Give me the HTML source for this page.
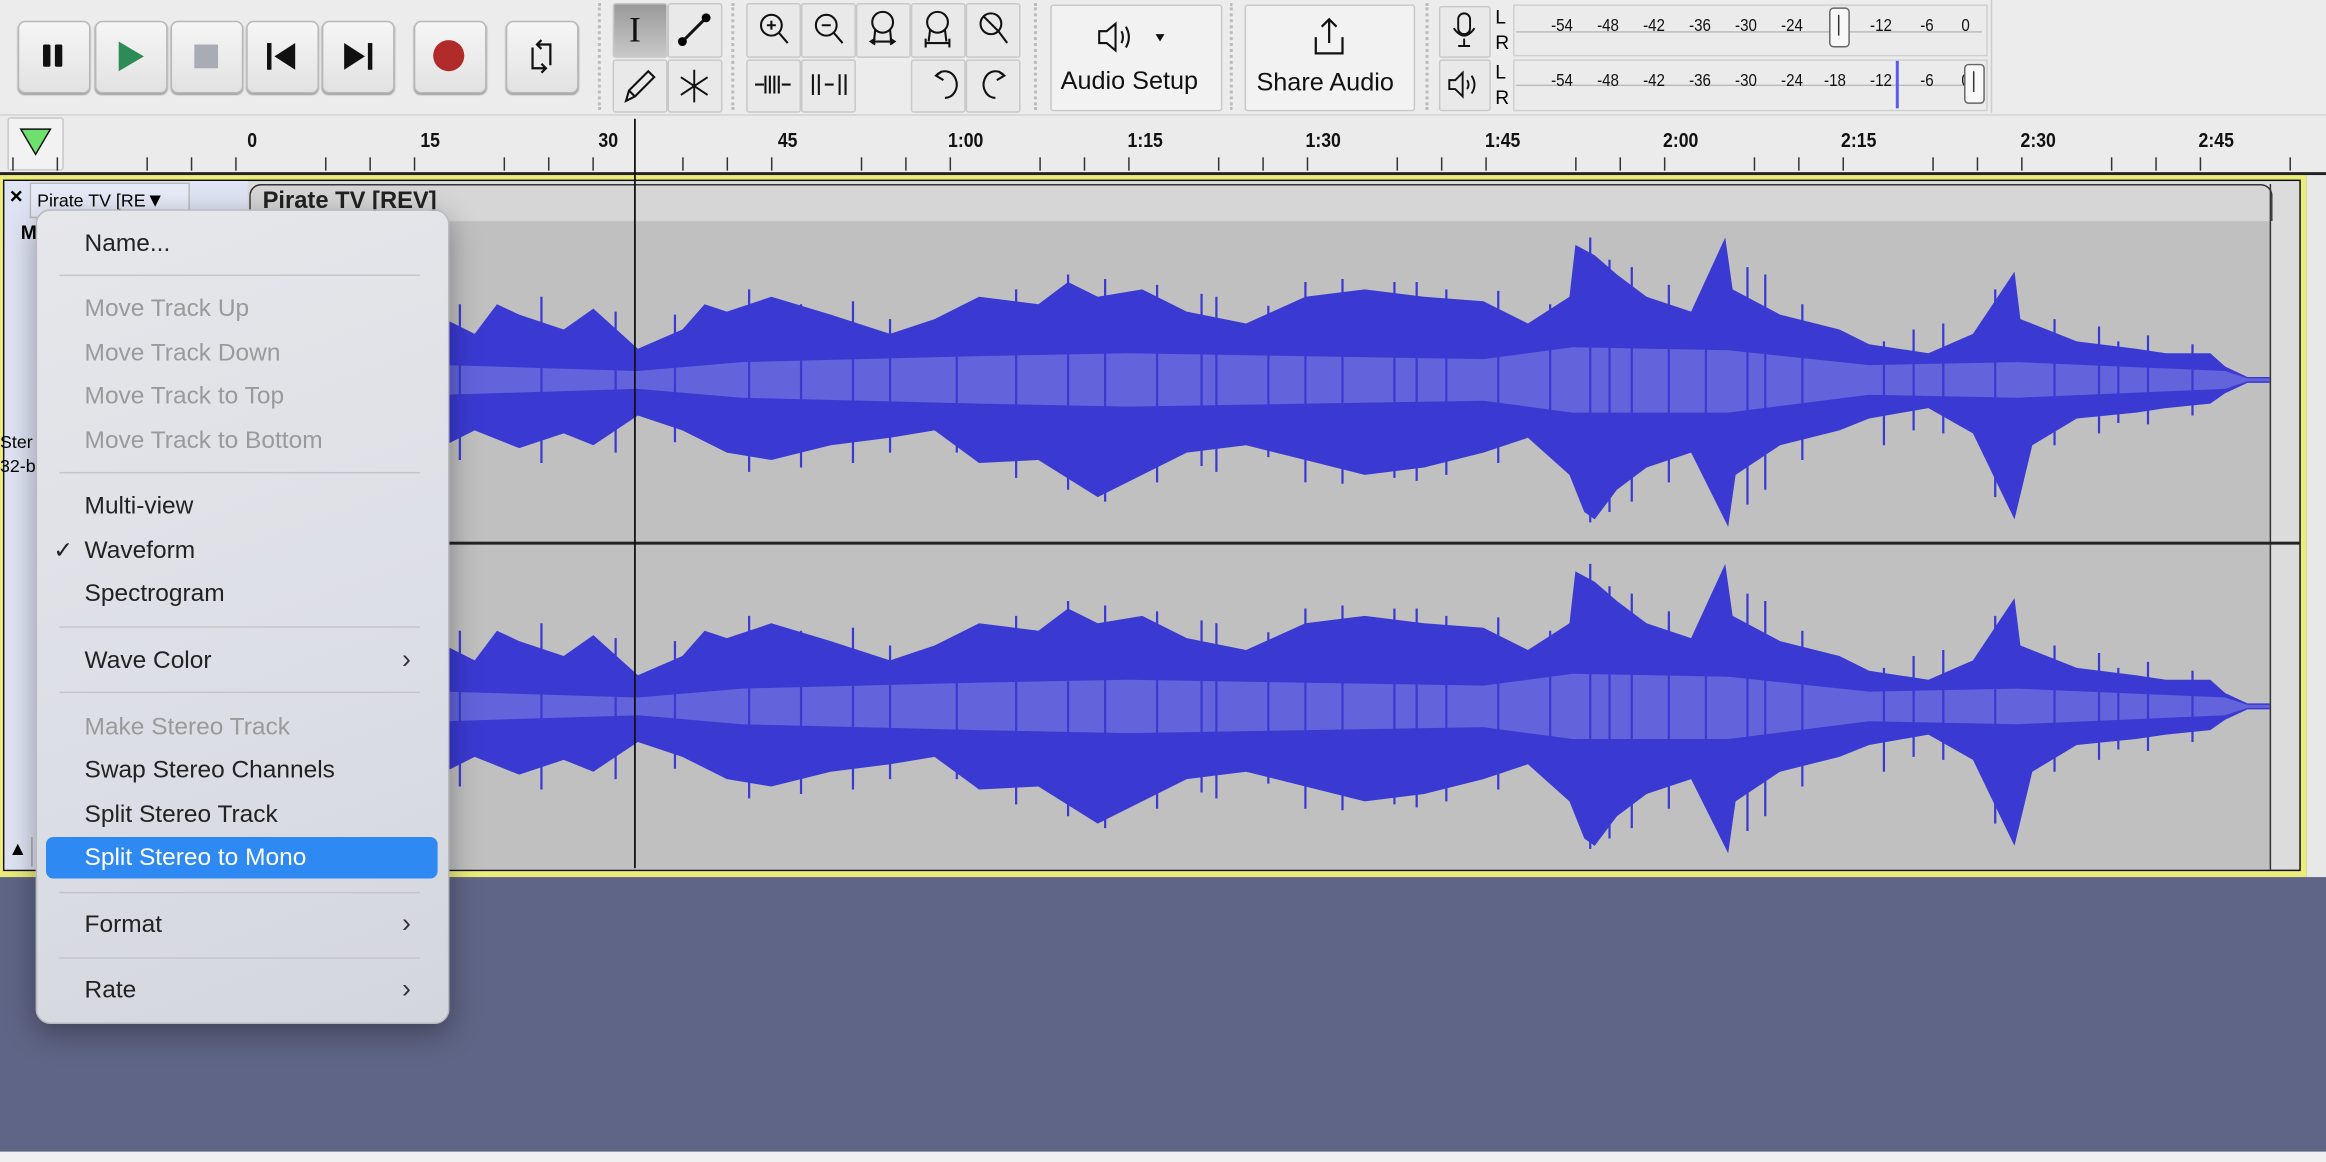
<!DOCTYPE html>
<html><head><meta charset="utf-8"><style>
html,body{margin:0;padding:0;width:2326px;height:1162px;overflow:hidden;background:#f0f0f0;}
#w{position:absolute;left:0;top:0;width:1568px;height:783px;transform-origin:0 0;transform:scale(1.48342,1.48404);font-family:"Liberation Sans",sans-serif;background:#ececec;overflow:hidden}
.a{position:absolute}
.btn{position:absolute;background:linear-gradient(#f6f6f6,#e2e2e2);border:1px solid #b8b8b8;border-radius:5px;box-shadow:0 1px 1px #999}
.tb{position:absolute;background:#e9e9e9;border:1px solid #c8c8c8;border-radius:2px}
.lbl{position:absolute;font-size:14px;font-weight:bold;transform:scaleX(.85);transform-origin:center;color:#111;width:50px;text-align:center;top:86px}
.mt{position:absolute;font-size:12px;transform:scaleX(.85);color:#111;width:24px;text-align:center}
.mi{position:absolute;left:57px;font-size:16.5px;color:#222;line-height:20px}
.dis{color:#9a9a9a}
.sep{position:absolute;left:40px;width:243px;height:1px;background:#c5c5c8}
.chev{position:absolute;left:271px;font-size:18px;color:#333;line-height:20px}
</style></head><body><div id="w">
<div class="a" style="left:0;top:0;width:1568px;height:77px;background:#ececec;border-bottom:1px solid #cfcfcf"></div>
<div class="btn" style="left:12px;top:14px;width:47px;height:47px"></div>
<div class="a" style="left:29px;top:30px;width:5px;height:15px;background:#111;border-radius:1px"></div><div class="a" style="left:37px;top:30px;width:5px;height:15px;background:#111;border-radius:1px"></div>
<div class="btn" style="left:64px;top:14px;width:47px;height:47px"></div>
<svg class="a" style="left:78px;top:27px" width="20" height="22"><path d="M2 1 L19 11 L2 21Z" fill="#2e8b57"/></svg>
<div class="btn" style="left:115px;top:14px;width:47px;height:47px"></div>
<div class="a" style="left:131px;top:30px;width:16px;height:16px;background:#a8acb4"></div>
<div class="btn" style="left:166px;top:14px;width:47px;height:47px"></div>
<svg class="a" style="left:179px;top:28px" width="22" height="20"><rect x="1" y="1" width="3" height="18" fill="#111"/><path d="M20 1 L6 10 L20 19Z" fill="#111"/></svg>
<div class="btn" style="left:217px;top:14px;width:47px;height:47px"></div>
<svg class="a" style="left:231px;top:28px" width="22" height="20"><rect x="17" y="1" width="3" height="18" fill="#111"/><path d="M1 1 L15 10 L1 19Z" fill="#111"/></svg>
<div class="btn" style="left:279px;top:14px;width:47px;height:47px"></div>
<div class="a" style="left:292px;top:27px;width:21px;height:21px;background:#b22b2b;border-radius:50%"></div>
<div class="btn" style="left:341px;top:14px;width:47px;height:47px"></div>
<svg class="a" style="left:353px;top:25px" width="24" height="26" fill="none" stroke="#111" stroke-width="1.5"><path d="M9 5 H18 V19 M15 21 H6 V7 M12 2 L9 5 L12 8 M12 18 L15 21 L12 24"/></svg>
<div class="a" style="left:403px;top:2px;width:2px;height:72px;border-left:2px dotted #bbb"></div>
<div class="tb" style="left:413px;top:2px;width:35px;height:35px;background:linear-gradient(#999,#c8c8c8)"></div>
<div class="a" style="left:424px;top:8px;font-size:24px;color:#111;font-family:'Liberation Serif'">I</div>
<div class="tb" style="left:450px;top:2px;width:35px;height:35px"></div>
<svg class="a" style="left:453px;top:5px" width="30" height="30"><path d="M6 24 L24 6" stroke="#111" stroke-width="2"/><circle cx="7" cy="23" r="3"/><circle cx="23" cy="7" r="3"/></svg>
<div class="tb" style="left:413px;top:40px;width:35px;height:34px"></div>
<svg class="a" style="left:417px;top:44px" width="28" height="28" fill="none" stroke="#111" stroke-width="1.4"><path d="M5 24 L7 17 L20 4 L24 8 L11 21Z M7 17 L11 21"/></svg>
<div class="tb" style="left:450px;top:40px;width:35px;height:34px"></div>
<svg class="a" style="left:455px;top:45px" width="26" height="26" stroke="#111" stroke-width="1.3"><path d="M13 2V24 M4 7 L22 19 M4 19 L22 7"/></svg>
<div class="a" style="left:493px;top:2px;width:2px;height:72px;border-left:2px dotted #bbb"></div>
<div class="tb" style="left:503px;top:2px;width:35px;height:35px"></div>
<div class="tb" style="left:540px;top:2px;width:35px;height:35px"></div>
<div class="tb" style="left:577px;top:2px;width:35px;height:35px"></div>
<div class="tb" style="left:614px;top:2px;width:35px;height:35px"></div>
<div class="tb" style="left:651px;top:2px;width:35px;height:35px"></div>
<svg class="a" style="left:503px;top:2px" width="190" height="36" fill="none" stroke="#111" stroke-width="1.4">
<circle cx="17" cy="15" r="7"/><path d="M22 20 L28 27 M14 15H20 M17 12V18"/>
<circle cx="54" cy="15" r="7"/><path d="M59 20 L65 27 M51 15H57"/>
<circle cx="92" cy="13" r="7"/><path d="M87 18 L86 28 M97 18 L98 28 M84 26H100 M87 24 L84 26 L87 28 M97 24 L100 26 L97 28"/>
<circle cx="129" cy="13" r="7"/><path d="M124 18 L123 26 M134 18 L135 26 M121 27H137 M121 24V30 M137 24V30"/>
<circle cx="165" cy="14" r="7"/><path d="M170 19 L176 27 M160 9 L170 19"/></svg>
<div class="tb" style="left:503px;top:40px;width:35px;height:34px"></div>
<div class="tb" style="left:540px;top:40px;width:35px;height:34px"></div>
<div class="tb" style="left:614px;top:40px;width:35px;height:34px"></div>
<div class="tb" style="left:651px;top:40px;width:35px;height:34px"></div>
<svg class="a" style="left:503px;top:40px" width="190" height="34" fill="none" stroke="#111" stroke-width="1.4">
<path d="M6 17H12 M24 17H30 M13 11V23 M16 11V23 M19 11V23 M22 11V23"/>
<path d="M45 10V24 M49 10V24 M53 17H59 M63 10V24 M67 10V24"/>
<path d="M128 11 A8 9 0 1 1 134 26 M132 8 L128 11 L133 14"/>
<path d="M174 11 A8 9 0 1 0 168 26 M170 8 L174 11 L169 14"/></svg>
<div class="a" style="left:697px;top:2px;width:2px;height:72px;border-left:2px dotted #bbb"></div>
<div class="tb" style="left:708px;top:3px;width:114px;height:70px;background:#f2f2f2"></div>
<svg class="a" style="left:738px;top:12px" width="50" height="26" fill="none" stroke="#111" stroke-width="1.4"><path d="M3 9H8L14 4V22L8 17H3Z M18 9 Q20 13 18 17 M21 6 Q25 13 21 20"/><path d="M41 11 L47 11 L44 16Z" fill="#111" stroke="none"/></svg>
<div class="a" style="left:715px;top:45px;font-size:17px;color:#111">Audio Setup</div>
<div class="a" style="left:829px;top:2px;width:2px;height:72px;border-left:2px dotted #bbb"></div>
<div class="tb" style="left:839px;top:3px;width:113px;height:70px;background:#f2f2f2"></div>
<svg class="a" style="left:882px;top:10px" width="28" height="30" fill="none" stroke="#111" stroke-width="1.5"><path d="M14 3V19 M9 8 L14 3 L19 8 M5 15V26H23V15"/></svg>
<div class="a" style="left:847px;top:46px;font-size:17px;color:#111">Share Audio</div>
<div class="a" style="left:961px;top:2px;width:2px;height:72px;border-left:2px dotted #bbb"></div>
<div class="tb" style="left:970px;top:4px;width:33px;height:33px"></div>
<svg class="a" style="left:976px;top:6px" width="22" height="30" fill="none" stroke="#111" stroke-width="1.3"><rect x="7" y="3" width="8" height="14" rx="4"/><path d="M4 13 Q11 23 18 13 M11 20V25 M7 25H15"/></svg>
<div class="tb" style="left:970px;top:40px;width:33px;height:33px"></div>
<svg class="a" style="left:974px;top:46px" width="26" height="22" fill="none" stroke="#111" stroke-width="1.3"><path d="M3 8H7L12 3V19L7 14H3Z M15 8 Q17 11 15 14 M18 5 Q22 11 18 17"/></svg>
<div class="a" style="left:1008px;top:3px;font-size:13px;line-height:17px">L<br>R</div>
<div class="a" style="left:1008px;top:40px;font-size:13px;line-height:17px">L<br>R</div>
<div class="a" style="left:1020px;top:3px;width:318px;height:33px;background:#ebebeb;border:1px solid #d0d0d0"></div>
<div class="a" style="left:1020px;top:40px;width:318px;height:33px;background:#ebebeb;border:1px solid #d0d0d0"></div>
<div class="a" style="left:1022px;top:21px;width:314px;height:1px;background:#bbb"></div>
<div class="a" style="left:1022px;top:57px;width:314px;height:1px;background:#bbb"></div>
<div class="mt" style="left:1041px;top:10px">-54</div><div class="mt" style="left:1072px;top:10px">-48</div><div class="mt" style="left:1103px;top:10px">-42</div><div class="mt" style="left:1134px;top:10px">-36</div><div class="mt" style="left:1165px;top:10px">-30</div><div class="mt" style="left:1196px;top:10px">-24</div><div class="mt" style="left:1256px;top:10px">-12</div><div class="mt" style="left:1287px;top:10px">-6</div><div class="mt" style="left:1313px;top:10px">0</div>
<div class="a" style="left:1233px;top:5px;width:12px;height:25px;background:#f8f8f8;border:1px solid #666;border-radius:3px"></div><div class="a" style="left:1239px;top:10px;width:1px;height:14px;background:#333"></div>
<div class="mt" style="left:1041px;top:47px">-54</div><div class="mt" style="left:1072px;top:47px">-48</div><div class="mt" style="left:1103px;top:47px">-42</div><div class="mt" style="left:1134px;top:47px">-36</div><div class="mt" style="left:1165px;top:47px">-30</div><div class="mt" style="left:1196px;top:47px">-24</div><div class="mt" style="left:1225px;top:47px">-18</div><div class="mt" style="left:1256px;top:47px">-12</div><div class="mt" style="left:1287px;top:47px">-6</div><div class="mt" style="left:1313px;top:47px">0</div>
<div class="a" style="left:1278px;top:41px;width:2px;height:32px;background:#5a5af0"></div>
<div class="a" style="left:1324px;top:43px;width:12px;height:25px;background:#f8f8f8;border:1px solid #666;border-radius:3px"></div><div class="a" style="left:1330px;top:48px;width:1px;height:14px;background:#333"></div>
<div class="a" style="left:1342px;top:0;width:1px;height:76px;background:#ccc"></div>
<div class="a" style="left:0;top:78px;width:1568px;height:38px;background:#ebebeb"></div>
<div class="tb" style="left:5px;top:79px;width:36px;height:34px;background:#f2f2f2"></div>
<svg class="a" style="left:13px;top:86px" width="22" height="20"><path d="M1 1H21L11 18Z" fill="#6ee06e" stroke="#111"/></svg>
<div class="lbl" style="left:145px">0</div><div class="lbl" style="left:265px">15</div><div class="lbl" style="left:385px">30</div><div class="lbl" style="left:506px">45</div><div class="lbl" style="left:626px">1:00</div><div class="lbl" style="left:747px">1:15</div><div class="lbl" style="left:867px">1:30</div><div class="lbl" style="left:988px">1:45</div><div class="lbl" style="left:1108px">2:00</div><div class="lbl" style="left:1228px">2:15</div><div class="lbl" style="left:1349px">2:30</div><div class="lbl" style="left:1469px">2:45</div>
<div class="a" style="left:0;top:106px;width:1568px;height:9px;background:repeating-linear-gradient(90deg,transparent 0 49px,#333 49px 50px,transparent 50px 79px,#333 79px 80px,transparent 80px 109px,#333 109px 110px,transparent 110px 140px,#333 140px 141px,transparent 141px 170px);background-size:120.4px 9px;background-position:49.6px 0"></div>
<div class="a" style="left:0;top:116px;width:1568px;height:2px;background:#222"></div>
<div class="a" style="left:0;top:118px;width:1568px;height:660px;background:#5f6586"></div>
<div class="a" style="left:0;top:118px;width:1555px;height:473px;background:#ecec7a"></div>
<div class="a" style="left:2px;top:121px;width:1549px;height:466px;background:#111"></div>
<div class="a" style="left:3px;top:122px;width:1547px;height:464px;background:#dcdcdc"></div>
<div class="a" style="left:1555px;top:118px;width:13px;height:473px;background:#e8e8e8"></div>
<div class="a" style="left:3px;top:122px;width:164px;height:464px;background:#dfe4f4"></div>
<div class="a" style="left:3px;top:124px;width:16px;height:22px;font-size:15px;font-weight:bold;text-align:center">×</div>
<div class="a" style="left:20px;top:123px;width:102px;height:22px;background:#e6ebf7;border:1px solid #bbb;font-size:12px;line-height:22px;padding-left:4px;overflow:hidden;white-space:nowrap">Pirate TV [RE<span style="font-size:13px">▼</span></div>
<div class="a" style="left:3px;top:564px;width:18px;height:20px;font-size:13px;text-align:center;border-right:1px solid #aaa">▲</div>
<div class="a" style="left:14px;top:149px;font-size:13px;font-weight:bold">M</div>
<div class="a" style="left:0;top:290px;font-size:12px;line-height:16px">Ster<br>32-b</div>
<div class="a" style="left:168px;top:124px;width:1362px;height:462px;background:#c0c0c0;border-left:1px solid #333;border-radius:8px 8px 0 0"></div>
<div class="a" style="left:168px;top:124px;width:1362px;height:24px;background:#d6d6d6;border:1px solid #333;border-bottom:none;border-radius:8px 8px 0 0"></div>
<div class="a" style="left:177px;top:127px;font-size:16px;font-weight:bold;color:#222">Pirate TV [REV]</div>
<div class="a" style="left:1530px;top:124px;width:1px;height:462px;background:#333"></div>
<div class="a" style="left:168px;top:365px;width:1382px;height:2px;background:#222"></div>
<svg class="a" style="left:0;top:0" width="1568" height="783">
<defs><g id="wv">
<path fill="#3a3ad2" d="M170,256 L300,256 300,215 320,225 335,205 350,212 380,222 400,208 430,235 460,222 475,205 490,210 520,200 560,212 600,225 630,215 660,200 700,205 720,190 740,200 770,195 800,210 840,218 880,200 920,195 960,200 1000,203 1030,218 1058,200 1062,165 1075,172 1090,185 1110,200 1140,210 1163,160 1168,195 1200,212 1240,222 1260,232 1300,238 1330,225 1358,183 1362,215 1400,230 1440,235 1460,238 1490,238 1500,247 1515,254 1530,254 1530,258 1515,258 1500,265 1490,272 1460,275 1440,278 1400,282 1370,300 1358,350 1330,292 1300,275 1260,282 1240,290 1200,300 1170,320 1165,355 1140,305 1110,315 1090,330 1075,350 1068,345 1058,320 1030,295 1000,305 960,315 920,320 880,310 840,300 800,305 770,320 740,335 700,310 660,312 630,290 600,295 560,300 520,310 490,305 460,290 430,280 400,300 380,292 350,302 320,290 300,300Z"/>
<path fill="#6363dc" d="M300,246 430,250 500,244 660,240 760,238 1000,242 1060,234 1165,236 1260,246 1360,244 1500,250 1515,255 1530,255 1530,257 1515,257 1500,262 1360,268 1260,266 1165,278 1060,278 1000,270 760,274 660,272 500,268 430,262 300,266Z"/>
<g stroke="#3a3ad2" stroke-width="1.5"><path d="M720 185V330 M1085 175V345 M1190 185V330 M1270 230V300 M1428 230V285 M880 190V325 M975 195V320 M600 215V305 M540 205V315 M780 192V325 M820 200V318 M940 190V322 M310 205V310 M365 200V312 M415 210V305 M455 212V298 M505 195V318 M575 203V312 M645 212V305 M685 195V322 M745 188V338 M810 198V314 M855 206V308 M905 188V326 M955 190V324 M1010 196V312 M1045 205V300 M1072 160V352 M1100 180V338 M1125 192V325 M1150 200V310 M1178 180V340 M1215 205V310 M1290 222V290 M1310 218V292 M1345 195V335 M1385 215V300 M1415 220V292 M1448 226V286 M1478 232V280"/></g>
</g></defs>
<use href="#wv"/><use href="#wv" transform="translate(0,220)"/>
<path d="M428 80V585" stroke="#111" stroke-width="1.2"/>
</svg>
<div class="a" style="left:0;top:776px;width:1568px;height:7px;background:#f0f0f0"></div>
<div class="a" style="left:24px;top:141px;width:277px;height:547px;background:linear-gradient(160deg,#e6e7ea,#dcdee6 60%,#d4d6de);border-radius:10px;box-shadow:0 6px 20px rgba(0,0,0,.35);border:1px solid #b8b8c0"></div>
<div class="mi" style="top:154px">Name...</div>
<div class="sep" style="top:185px"></div>
<div class="mi dis" style="top:198px">Move Track Up</div>
<div class="mi dis" style="top:228px">Move Track Down</div>
<div class="mi dis" style="top:257px">Move Track to Top</div>
<div class="mi dis" style="top:287px">Move Track to Bottom</div>
<div class="sep" style="top:318px"></div>
<div class="mi" style="top:331px">Multi-view</div>
<div class="a" style="left:36px;top:361px;font-size:16px;color:#222">✓</div>
<div class="mi" style="top:361px">Waveform</div>
<div class="mi" style="top:390px">Spectrogram</div>
<div class="sep" style="top:422px"></div>
<div class="mi" style="top:435px">Wave Color</div><div class="chev" style="top:434px">›</div>
<div class="sep" style="top:466px"></div>
<div class="mi dis" style="top:480px">Make Stereo Track</div>
<div class="mi" style="top:509px">Swap Stereo Channels</div>
<div class="mi" style="top:539px">Split Stereo Track</div>
<div class="a" style="left:31px;top:564px;width:264px;height:28px;background:#2f89f2;border-radius:5px"></div>
<div class="mi" style="top:568px;color:#fff">Split Stereo to Mono</div>
<div class="sep" style="top:601px"></div>
<div class="mi" style="top:613px">Format</div><div class="chev" style="top:612px">›</div>
<div class="sep" style="top:645px"></div>
<div class="mi" style="top:657px">Rate</div><div class="chev" style="top:656px">›</div>
</div></body></html>
